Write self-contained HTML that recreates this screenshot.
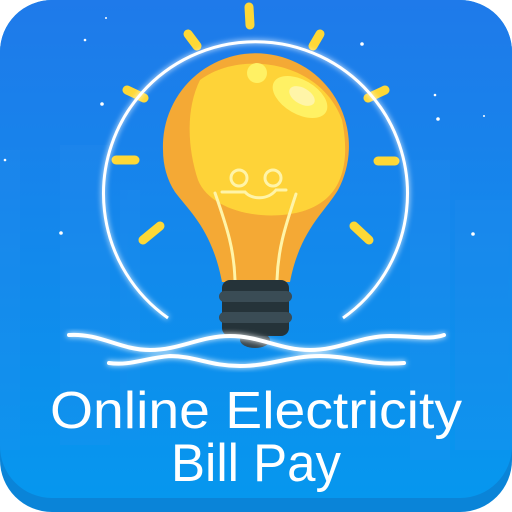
<!DOCTYPE html>
<html><head><style>html,body{margin:0;padding:0;background:#fff}svg{display:block}</style></head><body>
<svg width="512" height="512" viewBox="0 0 512 512" xmlns="http://www.w3.org/2000/svg">
<defs>
<linearGradient id="bg" x1="0" y1="0" x2="0" y2="1"><stop offset="0" stop-color="#1f7aea"/><stop offset="1" stop-color="#0697ee"/></linearGradient>
<filter id="glow" x="-20%" y="-20%" width="140%" height="140%"><feGaussianBlur stdDeviation="3" result="b"/><feMerge><feMergeNode in="b"/><feMergeNode in="SourceGraphic"/></feMerge></filter>
</defs>
<rect x="0" y="0" width="512" height="512" rx="52" fill="#0a84d8"/>
<rect x="0" y="0" width="512" height="498" rx="52" fill="url(#bg)"/>
<g fill="#2f8ff0" opacity="0.18">
<rect x="0" y="150" width="20" height="300"/><rect x="60" y="145" width="50" height="300"/><rect x="410" y="160" width="40" height="300"/><rect x="455" y="200" width="57" height="250"/><rect x="120" y="190" width="20" height="250"/>
</g>
<g fill="#fff">
<circle cx="85" cy="40" r="1.3"/><circle cx="362" cy="44" r="1.8"/><circle cx="102" cy="104" r="1.8"/><circle cx="435" cy="95" r="1.3"/><circle cx="438" cy="119" r="1.8"/><circle cx="484" cy="116" r="1"/><circle cx="5" cy="160" r="1.3"/><circle cx="61" cy="233" r="1.8"/><circle cx="473" cy="234" r="1.8"/><circle cx="106" cy="18" r="1"/>
</g>
<g stroke="#fed836" stroke-width="9" stroke-linecap="round" fill="none">
<line x1="249" y1="7" x2="250" y2="25"/>
<line x1="188" y1="34" x2="197" y2="46"/>
<line x1="320" y1="34" x2="313" y2="46"/>
<line x1="127" y1="90" x2="144" y2="98"/>
<line x1="385" y1="90" x2="368" y2="98"/>
<line x1="116" y1="160" x2="135" y2="160"/>
<line x1="378" y1="161" x2="395" y2="161"/>
<line x1="143" y1="240" x2="160" y2="226"/>
<line x1="354" y1="226" x2="369" y2="240"/>
</g>
<path d="M168 318 A152 152 0 1 1 343 318" stroke="#fff" stroke-width="3" fill="none" filter="url(#glow)"/>
<path d="M163 150 A93 93 0 1 1 338 190 C325 212 300 230 290 282 L222 282 C212 230 190 212 175 192 C167 180 163 165 163 150 Z" fill="#f4a935"/>
<path d="M200 80 C240 50 320 60 342 120 C350 160 345 200 300 212 C260 222 210 210 198 180 C188 150 185 110 200 80 Z" fill="#fed338"/>
<ellipse cx="300" cy="97" rx="30" ry="17" transform="rotate(30 300 97)" fill="#fff164"/>
<ellipse cx="302" cy="96" rx="14" ry="8" transform="rotate(30 302 96)" fill="#fff5a8"/>
<circle cx="257" cy="73" r="10" fill="#fff164"/>
<g stroke="#fff4a8" stroke-width="3" fill="none" stroke-linecap="round">
<path d="M215 193 C228 230 234 250 235 280"/><path d="M296 194 C284 230 278 250 277 280"/>
<path d="M222 192 L245 192 C252 200 268 200 276 190 L286 190"/>
<circle cx="239" cy="178" r="8"/><circle cx="273" cy="178" r="8"/>
</g>
<ellipse cx="255" cy="340" rx="15" ry="8" fill="#38474f"/>
<rect x="222" y="280" width="67" height="56" rx="8" fill="#253339"/>
<rect x="219" y="291" width="73" height="11" rx="5.5" fill="#3a4c55"/>
<rect x="219" y="312" width="73" height="11" rx="5.5" fill="#3a4c55"/>
<g stroke="#fff" stroke-width="4" fill="none" stroke-linecap="round" filter="url(#glow)">
<path d="M69 335 C100 333 120 350 150 350 C180 350 200 336 230 336 C260 336 280 350 310 350 C340 350 360 336 390 336 C415 336 430 340 444 335"/>
<path d="M109 363 C130 366 145 358 170 356 C195 356 210 366 240 366 C270 366 290 356 320 356 C350 356 370 366 404 363"/>
</g>
<g fill="#fff" font-family="'Liberation Sans', sans-serif" text-anchor="middle">
<text x="256" y="428" font-size="52" textLength="412" lengthAdjust="spacingAndGlyphs">Online Electricity</text>
<text x="256" y="481" font-size="53" textLength="170" lengthAdjust="spacingAndGlyphs">Bill Pay</text>
</g>
</svg>
</body></html>
